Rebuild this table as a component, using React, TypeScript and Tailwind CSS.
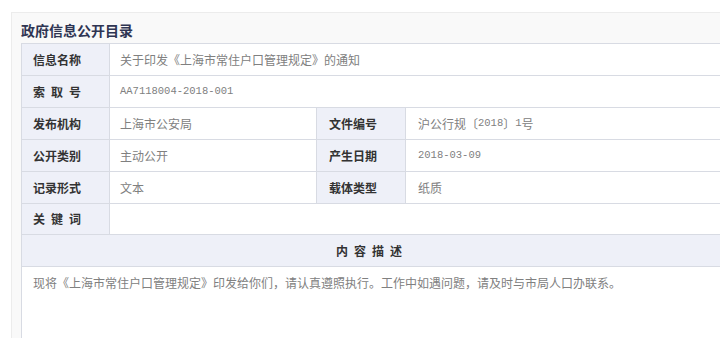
import React from "react";

const cjk = { fontFamily: '"Noto Sans CJK SC", "Noto Sans", sans-serif' };
const mono = { fontFamily: '"Liberation Mono", "Noto Sans CJK SC", monospace' };

const border = "border-[#d8dbe3]";

function Label({ children, className = "" }: { children: React.ReactNode; className?: string }) {
  return (
    <div
      className={`flex items-center bg-[#eef0f8] pl-[11px] text-[12px] font-bold text-[#333] border-r ${border} ${className}`}
    >
      {children}
    </div>
  );
}

function Value({ children, className = "" }: { children?: React.ReactNode; className?: string }) {
  return (
    <div className={`flex items-center bg-white pl-[10px] text-[12px] text-[#808080] ${className}`}>
      {children}
    </div>
  );
}

function Row({ children, h = "h-[32px]" }: { children: React.ReactNode; h?: string }) {
  return <div className={`flex ${h} border-b ${border}`}>{children}</div>;
}

export default function App() {
  return (
    <div className="relative h-[338px] w-[720px] overflow-hidden bg-white" style={cjk}>
      <div className="ml-[11px] mt-[12px] h-[340px] border-l border-t border-[#ececec] bg-[#f9f9f9] pl-[9px] pt-[5px]">
        <h1 className="h-[25px] text-[14px] font-bold leading-[25px] text-[#2f3553]">政府信息公开目录</h1>
        <div className={`w-[702px] border ${border} bg-white`}>
          <Row>
            <Label className="w-[88px]">信息名称</Label>
            <Value className="flex-1">关于印发《上海市常住户口管理规定》的通知</Value>
          </Row>
          <Row>
            <Label className="w-[88px] tracking-[6px]">索取号</Label>
            <Value className="flex-1">
              <span style={mono} className="text-[10.5px]">AA7118004-2018-001</span>
            </Value>
          </Row>
          <Row>
            <Label className="w-[88px]">发布机构</Label>
            <Value className={`w-[207px] border-r ${border}`}>上海市公安局</Value>
            <Label className="w-[89px] pl-[12px]">文件编号</Label>
            <Value className="flex-1 pl-[12px]">
              沪公行规〔<span style={mono} className="text-[10.5px]">2018</span>〕<span style={mono} className="text-[10.5px]">1</span>号
            </Value>
          </Row>
          <Row>
            <Label className="w-[88px]">公开类别</Label>
            <Value className={`w-[207px] border-r ${border}`}>主动公开</Value>
            <Label className="w-[89px] pl-[12px]">产生日期</Label>
            <Value className="flex-1 pl-[12px]">
              <span style={mono} className="text-[10.5px]">2018-03-09</span>
            </Value>
          </Row>
          <Row>
            <Label className="w-[88px]">记录形式</Label>
            <Value className={`w-[207px] border-r ${border}`}>文本</Value>
            <Label className="w-[89px] pl-[12px]">载体类型</Label>
            <Value className="flex-1 pl-[12px]">纸质</Value>
          </Row>
          <Row h="h-[31px]">
            <Label className="w-[88px] tracking-[6px]">关键词</Label>
            <Value className="flex-1" />
          </Row>
          <div
            className={`flex h-[32px] items-center justify-center border-b ${border} bg-[#eef0f8] text-[12px] font-bold tracking-[6px] text-[#333]`}
          >
            内容描述
          </div>
          <div className="h-[120px] bg-white pl-[11px] pt-[7px] text-[12px] text-[#808080]">
            现将《上海市常住户口管理规定》印发给你们，请认真遵照执行。工作中如遇问题，请及时与市局人口办联系。
          </div>
        </div>
      </div>
    </div>
  );
}
